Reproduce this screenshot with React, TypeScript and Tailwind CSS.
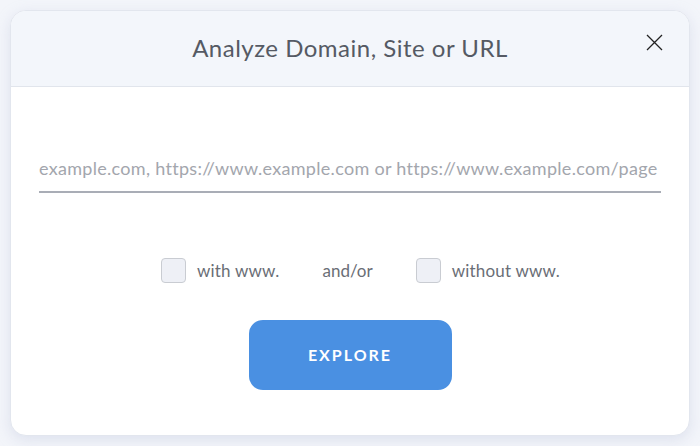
const CheckOption = ({ label }: { label: string }) => (
    <label className='flex items-center gap-[11px] cursor-pointer'>
        <span className='w-[25px] h-[25px] rounded-[4px] border border-[#c9ccd2] bg-[#eef0f6]' />
        <span className='text-[17px] text-[#6a6e76] tracking-[0.2px]'>{label}</span>
    </label>
)

const App = () => {
    return (
        <div className="w-[700px] h-[446px] bg-[#f3f5fa] p-[10px] font-['Lato',sans-serif]">
            <div className='w-[680px] h-[426px] flex flex-col rounded-[16px] bg-white border border-[#e2e6ee] shadow-[0_4px_14px_rgba(180,190,215,0.35)] overflow-hidden'>
                <div className='relative h-[76px] shrink-0 flex items-center justify-center bg-[#f3f6fb] border-b border-[#e1e5ec]'>
                    <h2 className='text-[24px] text-[#555a64] tracking-[0.5px] mb-[2px]'>Analyze Domain, Site or URL</h2>
                    <button className='absolute right-[26px] top-[23px] text-[#222]'>
                        <svg width='17' height='17' viewBox='0 0 17 17' fill='none' stroke='currentColor' strokeWidth='1.3'>
                            <path d='M1 1L16 16M16 1L1 16' />
                        </svg>
                    </button>
                </div>
                <div className='flex flex-col items-center px-[28px] pt-[58px]'>
                    <input
                        className='w-full h-[48px] border-b-2 border-[#a9adb6] text-[18px] text-[#555] placeholder:text-[#a3a6ad] outline-none tracking-[0.3px]'
                        type='text'
                        placeholder='example.com, https://www.example.com or https://www.example.com/page'
                        autoFocus
                    />
                    <div className='flex items-center mt-[65px] ml-[21px]'>
                        <CheckOption label='with www.' />
                        <span className='mx-[43px] text-[17px] text-[#6a6e76]'>and/or</span>
                        <CheckOption label='without www.' />
                    </div>
                    <button className='mt-[36px] w-[203px] h-[70px] rounded-[14px] bg-[#4a90e2] text-white text-[16px] font-bold tracking-[2px]'>
                        EXPLORE
                    </button>
                </div>
            </div>
        </div>
    )
}

export default App
